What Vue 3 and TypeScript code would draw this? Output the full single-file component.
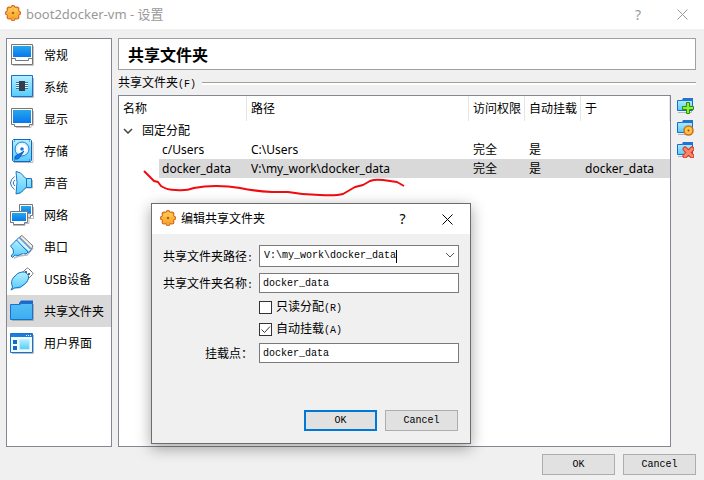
<script setup lang="ts">
import { ref } from 'vue'

interface Category {
  id: string
  label: string
  art: string
}

const screen = 'url(#screenFill)'
const cyan = 'url(#cyanFill)'

const categories: Category[] = [
  {
    id: 'general',
    label: '常规',
    art: `<path d="M3 22.5h20.5V3" fill="none" stroke="#c4c4c4"/>
      <path d="M1.500 1.500h21v20h-21z" fill="#fff" stroke="#777"/>
      <path d="M3 3h18v11h-18z" fill="${screen}"/>
      <path d="M1.500 15.500h4v2h13v-2h4" fill="none" stroke="#777"/>`,
  },
  {
    id: 'system',
    label: '系统',
    art: `<path d="M3 22.500h20.500V3" fill="none" stroke="#bbb"/>
      <path d="M1.500 .5h21v21h-21z" fill="${cyan}" stroke="#1a6fd0"/>
      <path d="M6 7.500h12M6 9.500h12M6 11.500h12M6 13.500h12" stroke="#3178a8"/>
      <path d="M6 8.500h12M6 10.500h12M6 12.500h12" stroke="#e6faff"/>
      <path d="M9 6h6v10H9z" fill="#343b4b"/>`,
  },
  {
    id: 'display',
    label: '显示',
    art: `<path d="M6 20.500h15v-2h2.500V4" fill="none" stroke="#c4c4c4"/>
      <path d="M1.500 1.500h21v16h-3v2h-15v-2h-3z" fill="#fff" stroke="#777"/>
      <path d="M3 3h18v13H3z" fill="${screen}"/>`,
  },
  {
    id: 'storage',
    label: '存储',
    art: `<path d="M4 23.500h19V3" fill="none" stroke="#bbb"/>
      <path d="M3.500 .5h17l1 1v20l-1 1h-17l-1-1v-20z" fill="${cyan}" stroke="#1565c8"/>
      <path d="M4 2h1M19 2h1M4 21h1M19 21h1" stroke="#0d5cc2"/>
      <circle cx="12" cy="10" r="7" fill="#d9f6ff" stroke="#2878d0"/>
      <circle cx="12" cy="10" r="4.500" fill="#fff"/>
      <circle cx="12" cy="10" r="1.800" fill="#1e78d8"/>
      <path d="M5 20q-1-3 2-4l4-2 3-2-2 3q-2 4-4 5z" fill="#1478e8" stroke="#1060c0"/>`,
  },
  {
    id: 'audio',
    label: '声音',
    art: `<path d="M9 23l7-6h6.500V9" fill="none" stroke="#bbb"/>
      <path d="M6 .5q5 .5 7 4 1.500 2.500 3.500 3h5v9h-5q-2 .5-3.500 3-2 3-7 3.500 2-11.500 0-22.500z" fill="${cyan}" stroke="#1c73ca"/>
      <path d="M16.500 7.500v9" stroke="#1c73ca"/>
      <path d="M4.500 5.500q-8 6.500 0 13" fill="none" stroke="#1c73ca"/>
      <path d="M5 9q-3.500 3 0 6" fill="none" stroke="#1c73ca"/>`,
  },
  {
    id: 'network',
    label: '网络',
    art: `<path d="M9.500 1.500h13v11h-2v2h-11z" fill="#fff" stroke="#777"/>
      <path d="M11 3h10v8H11z" fill="${screen}"/>
      <path d="M3 22.500h12v-2h4V10M16 15.500h7.500V4" fill="none" stroke="#bbb"/>
      <path d="M.5 8.500h17v11h-3v2h-11v-2h-3z" fill="#fff" stroke="#777"/>
      <path d="M2 10h14v8H2z" fill="${screen}"/>`,
  },
  {
    id: 'serial',
    label: '串口',
    art: `<path d="M4 23l5-2 8-1 6-7" fill="none" stroke="#bbb" stroke-width="1.500"/>
      <path d="M9.500 2l2.500-1.500L23 11l-1.500 3z" fill="#eee" stroke="#777"/>
      <path d="M9 2.500L21 14.500l-2 3-13-12z" fill="#d6f4ff" stroke="#1970ce"/>
      <path d="M6.500 5L18 17l-2 2-3-.5-5 2-3-.5-2.500 2.500L1 21l2.500-3L3 14 .5 11z" fill="${cyan}" stroke="#1970ce"/>
      <path d="M3 9l11 9.500" stroke="#8adcf8"/>`,
  },
  {
    id: 'usb',
    label: 'USB设备',
    art: `<path d="M2 23l2-2 6 0 7-6 2-5 4-4" fill="none" stroke="#bbb"/>
      <path d="M12.500 5.500l4-4q1-1 2 0l4 4q1 1 0 2l-4 4z" fill="#fff" stroke="#777"/>
      <path d="M15 4h2v2h-2zM18 6h2v2h-2z" fill="#666"/>
      <path d="M1 23l1.500-3Q0 14 4 10q4-5 8-5 3-.5 5 1.500t1.500 4.500-3 5.500q-5 5-11 4.500z" fill="${cyan}" stroke="#1970ce"/>`,
  },
  {
    id: 'shared',
    label: '共享文件夹',
    art: `<path d="M2 21.500h21.500V5" fill="none" stroke="#aaa"/>
      <path d="M9 4l2-2.500h12V9H9z" fill="#1b67cc"/>
      <path d="M.5 5.500h9l2-1h11v16H.5z" fill="url(#folderFill)" stroke="#1870d0"/>`,
  },
  {
    id: 'ui',
    label: '用户界面',
    art: `<path d="M2 22.500h21.500V4" fill="none" stroke="#bbb"/>
      <path d="M.5 2.500h22v19H.5z" fill="#effcff" stroke="#1870d0"/>
      <path d="M1 3h21v3H1z" fill="#1c7de0"/>
      <path d="M16 4.500h1m1 0h1m1 0h1" stroke="#fff"/>
      <path d="M3 9h4v4H3zM3 15h4v4H3z" fill="#1668cc"/>
      <path d="M9.500 8.500h10v10h-10z" fill="${cyan}" stroke="#c9efff"/>`,
  },
]

const folderArt = `<path d="M1 15.500h13.500V3" fill="none" stroke="#b5b5b5"/>
  <path d="M5 3l1-2h10v5H5z" fill="#2672d2"/>
  <path d="M.5 3.500h5l1-1h9v11H.5z" fill="url(#cyanFill)" stroke="#1a6ccc"/>
  <path d="M6 2h9v2H6z" fill="#2672d2"/>`

const tools = [
  {
    label: '添加共享文件夹',
    art: folderArt + '<path d="M9.500 5.500h3v4h4v3h-4v4h-3v-4h-4v-3h4z" fill="#92f02c" stroke="#2b8c12"/>',
  },
  {
    label: '编辑共享文件夹',
    art: folderArt + `<circle cx="11.500" cy="11.500" r="4.500" fill="#ffc348" stroke="#d06c18" stroke-width="1.500"/>
      <circle cx="11.500" cy="11.500" r="1" fill="#9c4b10"/>`,
  },
  {
    label: '移除共享文件夹',
    art: folderArt + `<path d="M8 8l7 7M15 8l-7 7" stroke="#d33a20" stroke-width="5" stroke-linecap="round"/>
      <path d="M8 8l7 7M15 8l-7 7" stroke="#ff8468" stroke-width="3" stroke-linecap="round"/>`,
  },
]

const lobes = Array.from({ length: 8 }, (_, i) => {
  const a = (i * Math.PI) / 4
  return `cx="${(8 + 5.5 * Math.cos(a)).toFixed(1)}" cy="${(8 + 5.5 * Math.sin(a)).toFixed(1)}"`
})
const gearArt =
  lobes.map((p) => `<circle ${p} r="2.500" fill="#d2611a"/>`).join('') +
  lobes.map((p) => `<circle ${p} r="1.500" fill="#fbb03a"/>`).join('') +
  `<circle cx="8" cy="8" r="5.800" fill="url(#gearFill)"/>
  <circle cx="8" cy="8" r="1.300" fill="#b85a1c"/>
  <g fill="#d98a30"><circle cx="8" cy="4" r=".6"/><circle cx="8" cy="12" r=".6"/><circle cx="4" cy="8" r=".6"/><circle cx="12" cy="8" r=".6"/></g>`

const current = ref('shared')
const folders = [
  { name: 'c/Users', path: 'C:\\Users', access: '完全', auto: '是', at: '' },
  { name: 'docker_data', path: 'V:\\my_work\\docker_data', access: '完全', auto: '是', at: 'docker_data' },
]
const selected = ref('docker_data')

const folderPath = ref('V:\\my_work\\docker_data')
const folderName = ref('docker_data')
const readOnly = ref(false)
const autoMount = ref(true)
const mountPoint = ref('docker_data')
</script>

<template>
  <div class="window">
    <svg class="defs" width="0" height="0" aria-hidden="true">
      <defs>
        <linearGradient id="screenFill" x2="0" y2="1">
          <stop stop-color="#25a7ec" /><stop offset="1" stop-color="#0878ee" />
        </linearGradient>
        <linearGradient id="cyanFill" x2="0" y2="1">
          <stop stop-color="#b5efff" /><stop offset="1" stop-color="#55ccfb" />
        </linearGradient>
        <linearGradient id="folderFill" x2="0" y2="1">
          <stop stop-color="#55bdf6" /><stop offset="1" stop-color="#3baeee" />
        </linearGradient>
        <linearGradient id="gearFill" x2="0" y2="1">
          <stop stop-color="#ffd257" /><stop offset="1" stop-color="#f9a32c" />
        </linearGradient>
      </defs>
    </svg>

    <header class="titlebar main">
      <svg class="gear" viewBox="0 0 16 16" v-html="gearArt"></svg>
      <span class="caption">boot2docker-vm - 设置</span>
      <button class="chrome" aria-label="帮助">?</button>
      <button class="chrome" aria-label="关闭">
        <svg width="11" height="11" viewBox="0 0 11 11"><path d="M.5.5l10 10M10.500.5l-10 10" fill="none" stroke="currentColor" /></svg>
      </button>
    </header>

    <main class="content">
      <nav class="sidebar">
        <button
          v-for="c in categories"
          :key="c.id"
          class="category"
          :class="{ active: c.id === current }"
          @click="current = c.id"
        >
          <svg width="24" height="24" viewBox="0 0 24 24" v-html="c.art"></svg>
          <span>{{ c.label }}</span>
        </button>
      </nav>

      <section class="page">
        <h1 class="heading">共享文件夹</h1>
        <h2 class="group"><span>共享文件夹<span class="mono">(F)</span></span></h2>
        <div class="body">
          <div class="tree">
            <table>
              <colgroup>
                <col class="c-name" /><col /><col class="c-flag" /><col class="c-flag" /><col class="c-at" />
              </colgroup>
              <thead>
                <tr><th>名称</th><th>路径</th><th>访问权限</th><th>自动挂载</th><th>于</th></tr>
              </thead>
              <tbody>
                <tr>
                  <td colspan="5">
                    <div class="branch">
                      <svg width="10" height="6" viewBox="0 0 10 6"><path d="M1 1l4 4 4-4" fill="none" stroke="#444" stroke-width="1.500" /></svg>
                      <span>固定分配</span>
                    </div>
                  </td>
                </tr>
                <tr
                  v-for="f in folders"
                  :key="f.name"
                  :class="{ selected: f.name === selected }"
                  @click="selected = f.name"
                >
                  <td><div class="leaf">{{ f.name }}</div></td>
                  <td><div>{{ f.path }}</div></td>
                  <td><div>{{ f.access }}</div></td>
                  <td><div>{{ f.auto }}</div></td>
                  <td><div>{{ f.at }}</div></td>
                </tr>
              </tbody>
            </table>
          </div>
          <div class="tools">
            <button v-for="t in tools" :key="t.label" :aria-label="t.label">
              <svg width="17" height="17" viewBox="0 0 17 17" v-html="t.art"></svg>
            </button>
          </div>
        </div>
      </section>
    </main>

    <footer class="actions">
      <button class="push">OK</button>
      <button class="push">Cancel</button>
    </footer>

    <svg class="scribble" width="270" height="30" viewBox="0 0 270 30" aria-hidden="true">
      <path
        d="M4 3L14 13L18 14L21 18Q27 22 36 22Q46 23 54 20Q64 18 76 18Q89 18 100 20Q114 23 132 24L148 24Q164 27 180 27Q196 28 203 26L215 19L223 17L230 13Q235 11 243 12L257 14L264 18"
        fill="none" stroke="#f20a0f" stroke-width="2" stroke-linejoin="round"
      />
    </svg>

    <form class="dialog" role="dialog" aria-labelledby="dialog-title" @submit.prevent>
      <header class="titlebar">
        <svg class="gear" viewBox="0 0 16 16" v-html="gearArt"></svg>
        <span id="dialog-title" class="caption">编辑共享文件夹</span>
        <button type="button" class="chrome" aria-label="帮助">?</button>
        <button type="button" class="chrome" aria-label="关闭">
          <svg width="11" height="11" viewBox="0 0 11 11"><path d="M.5.5l10 10M10.500.5l-10 10" fill="none" stroke="currentColor" /></svg>
        </button>
      </header>
      <div class="fields">
        <label for="path">共享文件夹路径<span class="mono">:</span></label>
        <div class="combo">
          <input id="path" v-model="folderPath" type="text" />
          <i class="caret"></i>
          <button type="button" aria-label="展开">
            <svg width="10" height="6" viewBox="0 0 10 6"><path d="M1 1l4 4 4-4" fill="none" stroke="#555" /></svg>
          </button>
        </div>
        <label for="name">共享文件夹名称<span class="mono">:</span></label>
        <input id="name" v-model="folderName" class="line" type="text" />
        <label class="check">
          <span class="box">
            <input v-model="readOnly" type="checkbox" />
          </span>
          <span class="check-text">只读分配<span class="mono">(R)</span></span>
        </label>
        <label class="check">
          <span class="box">
            <input v-model="autoMount" type="checkbox" />
            <svg v-if="autoMount" width="13" height="13" viewBox="0 0 13 13"><path d="M2.500 6.500l3 3 5.500-6" fill="none" stroke="#333" /></svg>
          </span>
          <span class="check-text">自动挂载<span class="mono">(A)</span></span>
        </label>
        <label for="mount">挂载点：</label>
        <input id="mount" v-model="mountPoint" class="line" type="text" />
      </div>
      <div class="buttons">
        <button class="push default">OK</button>
        <button type="button" class="push">Cancel</button>
      </div>
    </form>
  </div>
</template>

<style>
body {
  margin: 0;
}
</style>

<style scoped>
.window {
  position: relative;
  display: flex;
  flex-direction: column;
  min-height: 100vh;
  background: #f0f0f0;
  color: #000;
  font: 12px/16px 'Noto Sans', 'Noto Sans CJK SC', sans-serif;
}
.window * {
  box-sizing: border-box;
}
.defs {
  position: absolute;
}
button {
  padding: 0;
  border: 0;
  background: none;
  color: inherit;
  font: inherit;
}
.mono {
  font-family: 'Liberation Mono', monospace;
  font-size: 10px;
}
.titlebar {
  display: flex;
  align-items: center;
  height: 29px;
  padding-left: 5px;
  background: #fff;
  color: #999;
}
.gear {
  width: 16px;
  height: 16px;
  margin: 0 5px 3px 0;
}
.caption {
  flex: 1;
}
.main .caption {
  padding-bottom: 2px;
  font-size: 13px;
}
.chrome {
  width: 45px;
  height: 26px;
  font-size: 14px;
}
.main .chrome {
  width: 44px;
}
.chrome svg {
  display: block;
  margin: 0 auto;
}
.content {
  flex: 1;
  display: flex;
  gap: 6px;
  padding: 9px 8px 7px 6px;
}
.sidebar {
  flex: 0 0 106px;
  display: flex;
  flex-direction: column;
  border: 1px solid #828790;
  background: #fff;
}
.category {
  display: flex;
  align-items: center;
  gap: 10px;
  height: 32px;
  padding-left: 3px;
  white-space: nowrap;
}
.category span {
  padding-top: 2px;
}
.category.active {
  background: #d9d9d9;
}
.page {
  flex: 1;
  min-width: 0;
  display: flex;
  flex-direction: column;
}
.heading {
  height: 32px;
  margin: 0;
  padding-left: 9px;
  border: 1px solid #a0a0a0;
  background: #fff;
  font: bold 16px/30px 'Noto Sans CJK SC', sans-serif;
}
.group {
  display: flex;
  align-items: center;
  height: 25px;
  margin: 0;
  padding-top: 2px;
  font-size: 12px;
  font-weight: normal;
}
.group::after {
  content: '';
  flex: 1;
  height: 2px;
  margin-left: 6px;
  border-top: 1px solid #a0a0a0;
  background: #fff;
}
.body {
  flex: 1;
  display: flex;
  gap: 6px;
}
.tree {
  flex: 1;
  border: 1px solid #828790;
  background: #fff;
}
table {
  width: 100%;
  border-collapse: separate;
  border-spacing: 0;
  table-layout: fixed;
}
.c-name {
  width: 128px;
}
.c-flag {
  width: 56px;
}
.c-at {
  width: 89px;
}
th {
  height: 25px;
  padding: 0 0 0 4px;
  border-right: 1px solid #e5e5e5;
  font-weight: normal;
  text-align: left;
  white-space: nowrap;
}
td {
  padding: 0;
  white-space: nowrap;
}
td div {
  height: 19px;
  padding-left: 4px;
  line-height: 19px;
}
.branch {
  display: flex;
  align-items: center;
  gap: 9px;
}
.leaf {
  margin-left: 40px;
  padding-left: 3px;
}
.selected div {
  background: #d9d9d9;
}
.tools {
  display: flex;
  flex-direction: column;
  gap: 5px;
  width: 19px;
  padding-top: 2px;
}
.tools button {
  width: 17px;
  height: 17px;
}
.tools svg {
  display: block;
}
.actions,
.buttons {
  display: flex;
  justify-content: flex-end;
  gap: 8px;
}
.actions {
  padding: 0 8px 5px;
}
.push {
  width: 73px;
  height: 21px;
  border: 1px solid #adadad;
  background: #e1e1e1;
  font: 10px/16px 'Liberation Mono', monospace;
}
.push.default {
  border: 2px solid #0078d7;
}
.scribble {
  position: absolute;
  top: 168px;
  left: 140px;
}
.dialog {
  position: absolute;
  top: 203px;
  left: 151px;
  width: 320px;
  border: 1px solid #6d6d6d;
  background: #f0f0f0;
  box-shadow: 0 4px 14px rgba(0, 0, 0, 0.36);
}
.dialog .titlebar {
  height: 30px;
  padding-left: 8px;
  color: #000;
}
.dialog .gear {
  margin-bottom: 2px;
}
.fields {
  display: grid;
  grid-template-columns: 90px 1fr;
  gap: 6px;
  align-items: center;
  padding: 11px 11px 47px;
}
.fields > label {
  height: 16px;
  line-height: 18px;
  text-align: right;
  white-space: nowrap;
}
.fields > .check {
  grid-column: 2;
  display: flex;
  align-items: center;
  gap: 4px;
}
.check-text {
  padding-top: 2px;
}
input[type='text'] {
  width: 100%;
  min-width: 0;
  padding: 0 4px;
  border: 0;
  outline: 0;
  font: 10px/16px 'Liberation Mono', monospace;
}
input.line[type='text'] {
  height: 20px;
  padding: 0 3px;
  border: 1px solid #7a7a7a;
  background: #fff;
}
.combo {
  position: relative;
  display: flex;
  height: 22px;
  border: 1px solid #7a7a7a;
  background: #fff;
  font: 10px/16px 'Liberation Mono', monospace;
}
.combo input {
  flex: 1;
  background: none;
}
.combo button {
  width: 17px;
}
.caret {
  position: absolute;
  top: 4px;
  left: calc(4px + 22ch);
  width: 1px;
  height: 13px;
  background: #000;
}
.box {
  display: grid;
  width: 13px;
  height: 13px;
}
.box > * {
  grid-area: 1 / 1;
}
.box input {
  appearance: none;
  width: 13px;
  height: 13px;
  margin: 0;
  border: 1px solid #333;
  background: #fff;
}
.box svg {
  z-index: 1;
  pointer-events: none;
}
.buttons {
  padding: 0 12px 12px;
}
</style>
